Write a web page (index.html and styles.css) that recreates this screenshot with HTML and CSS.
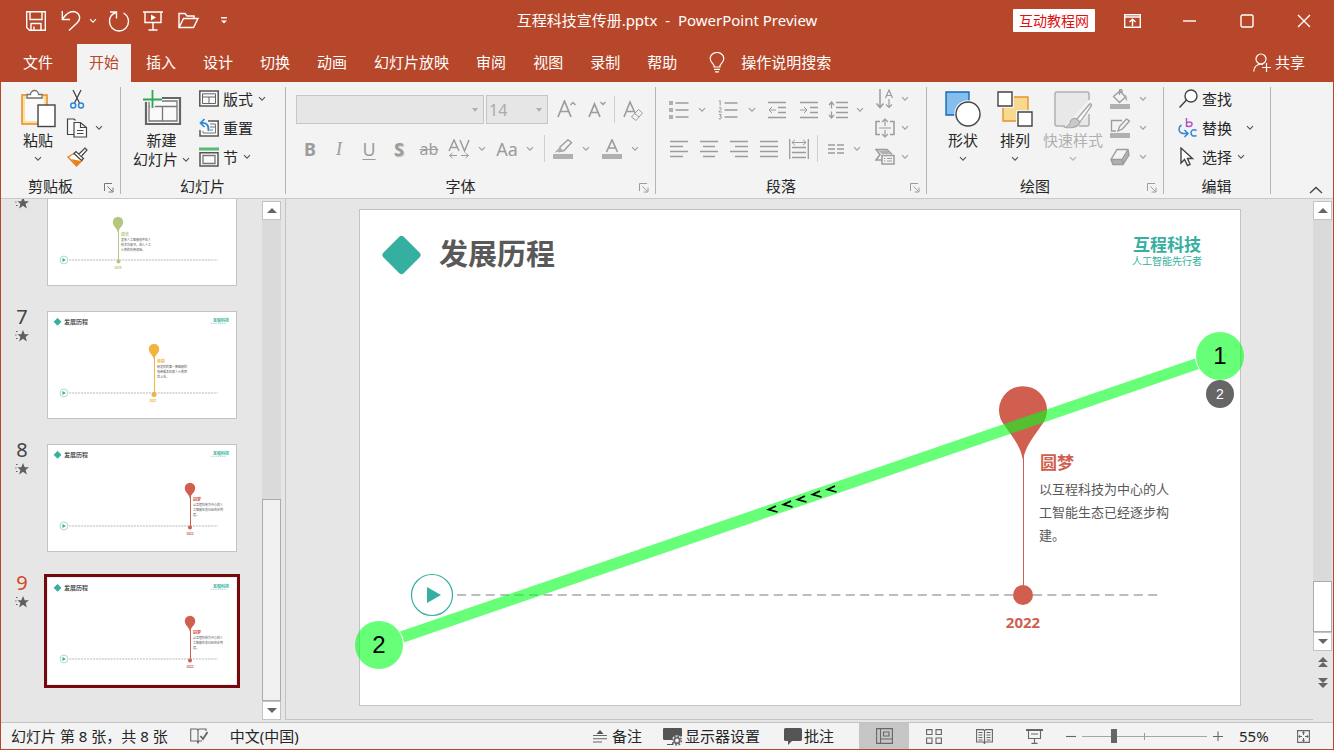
FILE: index.html
```html
<!DOCTYPE html>
<html lang="zh-CN">
<head>
<meta charset="utf-8">
<title>互程科技宣传册.pptx - PowerPoint Preview</title>
<link rel="stylesheet" href="styles.css">
</head>
<body class="window">
<svg class="defs" width="0" height="0" aria-hidden="true">
  <symbol id="chev" viewBox="0 0 8 6"><path d="M1 1.2 4 4.2 7 1.2" fill="none" stroke="currentColor" stroke-width="1.1"/></symbol>
  <symbol id="launch" viewBox="0 0 10 10"><path d="M.5 8V.5H8M3.5 3.5 8.5 8.5M9 4.500V9H4.500" fill="none" stroke="currentColor"/></symbol>
  <symbol id="star" viewBox="0 0 14 12"><path d="M8 0 9.700 4.200H14L10.600 6.900 11.900 11.500 8 8.800 4.100 11.500 5.400 6.900 2.500 4.200H6.300Z" fill="#5f5f5f"/><path d="M1 1.500h1.500M.3 5h1.200M1 8.500h1.500" stroke="#5f5f5f" stroke-width="1.200"/></symbol>
  <symbol id="tri-up" viewBox="0 0 10 5"><path d="M0 5 5 0 10 5Z" fill="#666"/></symbol>
  <symbol id="tri-down" viewBox="0 0 10 5"><path d="M0 0 5 5 10 0Z" fill="#666"/></symbol>
  <symbol id="mini" viewBox="0 0 190 108">
    <circle cx="16.500" cy="83.500" r="4" fill="#fff" stroke="#8fd3c7" stroke-width=".8"/><path d="M15 81.500v4l3.500-2Z" fill="#35b0a0"/>
    <path d="M22 83.500H173" stroke="#b5b5b5" stroke-width="1" stroke-dasharray="2 1"/>
  </symbol>
  <symbol id="mini-mark" viewBox="0 0 190 108">
    <path d="M10 7.500 13.500 11 10 14.500 6.500 11Z" fill="#35b0a0" stroke="#35b0a0" stroke-width="1" stroke-linejoin="round"/>
    <path d="M166 12.500h16" stroke="#8fd3c7" stroke-width=".9" stroke-dasharray="1.500 .8"/>
  </symbol>
  <symbol id="mini-pin" viewBox="-10 -10 20 30"><path d="M0 11C-.6 6-5.200 4.500-5.200 0A5.200 5.200 0 1 1 5.200 0C5.200 4.500 .6 6 0 11Z" fill="currentColor"/></symbol>
</svg>

<header class="titlebar">
  <div class="quick">
    <button aria-label="保存"><svg width="20" height="20" viewBox="0 0 20 20"><path d="M.7.7H19.300V19.300H3.500L.7 16.500ZM4 1V8.500H16V1M5 19V12.500H15V19M8 19V15.500"/></svg></button>
    <button aria-label="撤消"><svg width="20" height="21" viewBox="0 0 20 21"><path d="M1.300 1V9.500H9M1.500 9C5 4 8 1.500 12 1.500C19 2 20.500 9 16 13L8 20.500"/></svg></button>
    <button aria-label="撤消选项"><svg width="8" height="6"><use href="#chev"/></svg></button>
    <button aria-label="恢复"><svg width="22" height="22" viewBox="0 0 22 22"><path d="M2 2H8.500V8.500M8 2.500C3 4 1.500 8 1.500 11.500A9.500 9.500 0 0 0 20.500 11.500C20.500 8 19 5 15.500 3"/></svg></button>
    <button aria-label="从头开始"><svg width="20" height="20" viewBox="0 0 20 20"><path d="M0 1H20M2 1V11.500H18V1M10 12V18.500M5.500 19H14.500"/><path d="M8 3.500V9.500L13 6.500Z" class="solid"/></svg></button>
    <button aria-label="打开"><svg width="21" height="17" viewBox="0 0 21 17"><path d="M1 15.500V1.500H7L9 4H16V6.500M1 15.500 5.500 6.500H20L15.500 15.500Z"/></svg></button>
    <button aria-label="自定义快速访问工具栏"><svg width="6" height="7" viewBox="0 0 6 7"><path d="M0 .8H6"/><path d="M0 3.500H6L3 6.500Z" class="solid"/></svg></button>
  </div>
  <h1 class="doc-title">互程科技宣传册.pptx&nbsp; - &nbsp;PowerPoint Preview</h1>
  <div class="win-controls">
    <span class="site-tag">互动教程网</span>
    <button aria-label="功能区显示选项"><svg width="17" height="14" viewBox="0 0 17 14"><path d="M.7.7H16.300V13.300H.7ZM1 3H16M8.500 12V5.500M5.500 8 8.500 5.200 11.500 8"/></svg></button>
    <button aria-label="最小化"><svg width="13" height="2" viewBox="0 0 13 2"><path d="M0 1H13"/></svg></button>
    <button aria-label="最大化"><svg width="14" height="14" viewBox="0 0 14 14"><rect x="1" y="1" width="12" height="12" rx="1.500"/></svg></button>
    <button aria-label="关闭"><svg width="14" height="14" viewBox="0 0 14 14"><path d="M1 1 13 13M13 1 1 13"/></svg></button>
  </div>
</header>

<nav class="tabs">
  <button class="tab file">文件</button><button class="tab active">开始</button><button class="tab">插入</button><button class="tab">设计</button><button class="tab">切换</button><button class="tab">动画</button><button class="tab">幻灯片放映</button><button class="tab">审阅</button><button class="tab">视图</button><button class="tab">录制</button><button class="tab">帮助</button>
  <button class="tell-me"><svg width="16" height="21" viewBox="0 0 16 21"><path d="M5 15V13.500C4 11 1.200 10 1.200 6.500A6.600 5.800 0 0 1 14.800 6.500C14.800 10 12 11 11 13.500V15ZM5 17.300H11M6 19.800H10"/></svg>操作说明搜索</button>
  <button class="share"><svg width="18" height="19" viewBox="0 0 18 19"><circle cx="8" cy="6" r="5"/><path d="M.7 18.500C1 14 3.500 11.500 8 11L10 11.800M9 14.500H18M13.500 10V19"/></svg>共享</button>
</nav>

<section class="ribbon">
  <div class="group">
    <div class="group-body clip-body">
      <button class="big"><svg class="big-icon" width="36" height="40" viewBox="0 0 36 40"><rect x="2" y="6" width="25" height="29" fill="#fbe0a6" stroke="#e8912d" stroke-width="1.600"/><rect x="5" y="10" width="19" height="22" fill="#fafafa"/><path d="M7 9V5.500H10.500A4 4 0 0 1 18.500 5.500H22V9Z" fill="#fff" stroke="#767676" stroke-width="1.300"/><rect x="18" y="16" width="17" height="21.500" fill="#fff" stroke="#444" stroke-width="1.400"/></svg><span>粘贴</span><svg class="chev" width="8" height="6"><use href="#chev"/></svg></button>
      <div class="stack">
        <button class="row-btn" aria-label="剪切"><svg width="22" height="20" viewBox="0 0 22 20"><path d="M7 1 13.500 14M15 1 8.500 14" fill="none" stroke="#444" stroke-width="1.300"/><circle cx="7.200" cy="16.500" r="2.500" fill="none" stroke="#2b88d8" stroke-width="1.500"/><circle cx="15" cy="16.500" r="2.500" fill="none" stroke="#2b88d8" stroke-width="1.500"/></svg></button>
        <button class="row-btn" aria-label="复制"><svg width="22" height="20" viewBox="0 0 22 20"><path d="M8 16.500H1.500V1H8L9.500 2.500M8 4.500H14.500L20.500 9.500V19H8ZM14.500 4.500V9.500H20.500M11 12.500H17.500M11 15.500H17.500" fill="#fafafa" stroke="#444" stroke-width="1.200"/></svg><svg class="chev far" width="8" height="6"><use href="#chev"/></svg></button>
        <button class="row-btn" aria-label="格式刷"><svg width="22" height="20" viewBox="0 0 22 20"><path d="M2 10 8 6.500 16 13.500 10.500 19Z" fill="#fff" stroke="#e8811a" stroke-width="1.400"/><path d="M5 12 15 14 10.500 18.500Z" fill="#e8811a"/><path d="M8 6.500 10 4.500 17.500 11.500 15.500 13.500Z" fill="#fff" stroke="#444" stroke-width="1.200"/><path d="M13 7 19 1 21 3 15.500 9" fill="#fff" stroke="#444" stroke-width="1.200"/></svg></button>
      </div>
    </div>
    <div class="group-foot"><span>剪贴板</span><button class="launcher" aria-label="剪贴板选项"><svg width="10" height="10"><use href="#launch"/></svg></button></div>
  </div>

  <div class="group">
    <div class="group-body slides-body">
      <button class="big"><svg class="big-icon" width="40" height="40" viewBox="0 0 40 40"><path d="M4 9H38V35H4Z" fill="#fafafa" stroke="#666" stroke-width="2.200"/><path d="M7 12H35V32H7ZM7 17.500H35M20.500 18V32" fill="none" stroke="#777" stroke-width="1.300"/><path d="M10.500 2V21M1 10.500H20" stroke="#f3f3f3" stroke-width="5"/><path d="M10.500 1V19M1 10.500H20" stroke="#2fa84f" stroke-width="1.800"/></svg><span>新建</span><span class="with-chev">幻灯片<svg class="chev" width="8" height="6"><use href="#chev"/></svg></span></button>
      <div class="stack">
        <button class="row-btn"><svg width="20" height="20" viewBox="0 0 20 20"><path d="M.8 2H19.200V17H.8Z" fill="#fafafa" stroke="#555" stroke-width="1.500"/><path d="M3.500 4.800H16.500V14.500H3.500ZM3.500 8H16.500M10 8V14.500" fill="none" stroke="#666"/></svg>版式<svg class="chev" width="8" height="6"><use href="#chev"/></svg></button>
        <button class="row-btn"><svg width="20" height="20" viewBox="0 0 20 20"><path d="M9 3H19.200V18H1V12" fill="#fafafa" stroke="#555" stroke-width="1.500"/><path d="M11 6H16.500V15H4V13M11 9H16M11 12H14" fill="none" stroke="#777"/><path d="M5.500 1 1.500 5 5.500 9M2 5C7 4 10 7 9.500 13" fill="none" stroke="#2b88d8" stroke-width="1.700"/></svg>重置</button>
        <button class="row-btn"><svg width="20" height="20" viewBox="0 0 20 20"><path d="M0 .5H20V3.500H0Z" fill="#5bb974"/><path d="M1 5.700H19V19H1Z" fill="#fafafa" stroke="#555" stroke-width="1.500"/><path d="M4 8.500H16V16.500H4Z" fill="none" stroke="#777" stroke-width="1.300"/></svg>节<svg class="chev" width="8" height="6"><use href="#chev"/></svg></button>
      </div>
    </div>
    <div class="group-foot"><span>幻灯片</span></div>
  </div>

  <div class="group off">
    <div class="group-body font-body">
      <div class="font-row-a">
        <label class="combo"><select disabled aria-label="字体"><option></option></select><svg width="6" height="4" viewBox="0 0 10 5" preserveAspectRatio="none"><path d="M0 0 5 5 10 0Z"/></svg></label>
        <label class="combo"><select disabled aria-label="字号"><option>14</option></select><svg width="6" height="4" viewBox="0 0 10 5" preserveAspectRatio="none"><path d="M0 0 5 5 10 0Z"/></svg></label>
        <button aria-label="增大字号"><svg width="20" height="20" viewBox="0 0 20 20"><path d="M1 17 7.500 1 14 17M3.500 11.500H11.500" stroke-width="1.700"/><path d="M13.500 5 16 2.500 18.500 5" stroke-width="1.400"/></svg></button>
        <button aria-label="减小字号"><svg width="20" height="20" viewBox="0 0 20 20"><path d="M2 17 7.500 4 13 17M4 12.500H11" stroke-width="1.700"/><path d="M13.500 2 16 4.500 18.500 2" stroke-width="1.400"/></svg></button>
        <i class="sep"></i>
        <button aria-label="清除所有格式"><svg width="22" height="22" viewBox="0 0 22 22"><path d="M2 18 8 3 13 14M4 12.500H11.500" stroke-width="1.600"/><path d="M9.500 18 16.500 10.500 20.500 14 14 21.500ZM12.500 14.500 17 18"/></svg></button>
      </div>
      <div class="font-row-b">
        <button class="glyph bold">B</button><button class="glyph italic">I</button><button class="glyph under">U</button><button class="glyph bold shade">S</button><button class="glyph strike">ab</button>
        <button aria-label="字符间距"><svg width="22" height="20" viewBox="0 0 22 20"><path d="M1 12 6 1 11 12M3 8.500H9M12 1 16.500 12 21 1" stroke-width="1.500"/><path d="M4.500 14 1.500 16.500 4.500 19M1.500 16.500H9M17.500 14 20.500 16.500 17.500 19M20.500 16.500H13"/></svg></button>
        <svg class="chev" width="8" height="6"><use href="#chev"/></svg>
        <button class="glyph">Aa</button><svg class="chev" width="8" height="6"><use href="#chev"/></svg>
        <i class="sep"></i>
        <button aria-label="文本突出显示颜色"><svg width="20" height="20" viewBox="0 0 20 20"><path d="M7 8 15 .8 18.500 3.500 11 11.500 6.500 12.500Z" stroke-width="1.400"/><path d="M1.500 13.500 7 8 10.500 12Z" class="fillg"/><path d="M0 15H20V20H0Z" class="fillg"/></svg></button>
        <svg class="chev" width="8" height="6"><use href="#chev"/></svg>
        <button aria-label="字体颜色"><svg width="20" height="20" viewBox="0 0 20 20"><path d="M4.500 13 10 .8 15.500 13M6.500 9H13.500" stroke-width="1.600"/><path d="M0 15H20V20H0Z" class="fillg"/></svg></button>
        <svg class="chev" width="8" height="6"><use href="#chev"/></svg>
      </div>
    </div>
    <div class="group-foot"><span>字体</span><button class="launcher" aria-label="字体选项"><svg width="10" height="10"><use href="#launch"/></svg></button></div>
  </div>

  <div class="group off">
    <div class="group-body para-body">
      <div class="para-rows">
        <div class="para-row-a">
          <button aria-label="项目符号"><svg width="20" height="20" viewBox="0 0 20 20"><path d="M0 1H4V5H0ZM0 8H4V12H0ZM0 15H4V19H0Z" class="fillg"/><path d="M6.500 3H19.500M6.500 10H19.500M6.500 17H19.500" stroke-width="1.400"/></svg></button>
          <svg class="chev" width="8" height="6"><use href="#chev"/></svg>
          <button aria-label="编号"><svg width="20" height="20" viewBox="0 0 20 20"><path d="M.8 1.500 2.200.6V5.500M.8 8Q3.500 6.500 3.300 8.800L.8 12H4M.8 14.600H3.400L2 16.400Q4 16.500 3.300 18.300 2.500 19.500.6 18.800"/><path d="M6.500 3H19.500M6.500 10H19.500M6.500 17H19.500" stroke-width="1.400"/></svg></button>
          <svg class="chev" width="8" height="6"><use href="#chev"/></svg>
          <button aria-label="减少缩进"><svg width="18" height="18" viewBox="0 0 18 18"><path d="M0 1.500H18M10 6.500H18M10 11.500H18M0 16.500H18" stroke-width="1.500"/><path d="M8 9H1M4 6 1 9 4 12"/></svg></button>
          <button aria-label="增加缩进"><svg width="18" height="18" viewBox="0 0 18 18"><path d="M0 1.500H18M10 6.500H18M10 11.500H18M0 16.500H18" stroke-width="1.500"/><path d="M0 9H7M4 6 7 9 4 12"/></svg></button>
          <button aria-label="行距"><svg width="20" height="18" viewBox="0 0 20 18"><path d="M8 1.500H20M8 6.500H20M8 11.500H20M8 16.500H20" stroke-width="1.500"/><path d="M3.500 1V7.500M1 4 3.500 1 6 4M3.500 10.500V17M1 14 3.500 17 6 14" stroke-width="1.300"/></svg></button>
          <svg class="chev" width="8" height="6"><use href="#chev"/></svg>
        </div>
        <div class="para-row-b">
          <button aria-label="左对齐"><svg width="18" height="18" viewBox="0 0 18 18"><path d="M0 1.500H18M0 6.500H13M0 11.500H18M0 16.500H13" stroke-width="1.500"/></svg></button>
          <button aria-label="居中"><svg width="18" height="18" viewBox="0 0 18 18"><path d="M0 1.500H18M3 6.500H15M0 11.500H18M3 16.500H15" stroke-width="1.500"/></svg></button>
          <button aria-label="右对齐"><svg width="18" height="18" viewBox="0 0 18 18"><path d="M0 1.500H18M5 6.500H18M0 11.500H18M5 16.500H18" stroke-width="1.500"/></svg></button>
          <button aria-label="两端对齐"><svg width="18" height="18" viewBox="0 0 18 18"><path d="M0 1.500H18M0 6.500H18M0 11.500H18M0 16.500H18" stroke-width="1.500"/></svg></button>
          <button aria-label="分散对齐"><svg width="20" height="20" viewBox="0 0 20 20"><path d="M.7 0V20M19.300 0V20M3 8.500H17M3 13.500H17M3 18.500H17" stroke-width="1.300"/><path d="M3 3.500H17M6 .8 3 3.500 6 6.200M14 .8 17 3.500 14 6.200"/></svg></button>
          <i class="sep"></i>
          <button aria-label="分栏"><svg width="16" height="10" viewBox="0 0 16 10"><path d="M0 1H7M9 1H16M0 5H7M9 5H16M0 9H7M9 9H16" stroke-width="1.300"/></svg></button>
          <svg class="chev" width="8" height="6"><use href="#chev"/></svg>
        </div>
      </div>
      <div class="stack duo">
        <button aria-label="文字方向"><svg width="20" height="20" viewBox="0 0 20 20"><path d="M5 0V18M1.500 14.500 5 18.500 8.500 14.500" stroke-width="1.500"/><path d="M10.500 9 14 1 17.500 9M11.500 6.500H16.500M14 10V18M11 15.500 14 18.500 17 15.500" stroke-width="1.200"/></svg></button><svg class="chev" width="8" height="6"><use href="#chev"/></svg>
        <button aria-label="对齐文本"><svg width="20" height="20" viewBox="0 0 20 20"><path d="M5 3.500H1V16.500H5M15 3.500H19V16.500H15" stroke-width="1.500"/><path d="M4 10H16M10 1V8M7 4 10 1 13 4M10 12V19M7 16 10 19 13 16" stroke-width="1.200"/></svg></button><svg class="chev" width="8" height="6"><use href="#chev"/></svg>
        <button aria-label="转换为 SmartArt"><svg width="20" height="18" viewBox="0 0 20 18"><path d="M3 2.500H12L15 6H7Z" class="fillg"/><path d="M7 12H1L5 6.500 1 1.500H12L17 6.500" stroke-width="1.500"/><path d="M7 7.500H19V16H7Z" stroke-width="1.500"/><path d="M9 10.500H10.500M12 10.500H17M9 13H10.500M12 13H17"/></svg></button><svg class="chev" width="8" height="6"><use href="#chev"/></svg>
      </div>
    </div>
    <div class="group-foot"><span>段落</span><button class="launcher" aria-label="段落选项"><svg width="10" height="10"><use href="#launch"/></svg></button></div>
  </div>

  <div class="group">
    <div class="group-body draw-body">
      <button class="big"><svg class="big-icon" width="36" height="38" viewBox="0 0 36 38"><path d="M1 2H24V25H1Z" fill="#83beec" stroke="#1668b5" stroke-width="1.400"/><circle cx="23" cy="24" r="13.800" fill="#f3f3f3"/><circle cx="23" cy="24" r="12" fill="#fff" stroke="#444" stroke-width="1.400"/></svg><span>形状</span><svg class="chev" width="8" height="6"><use href="#chev"/></svg></button>
      <button class="big"><svg class="big-icon" width="36" height="38" viewBox="0 0 36 38"><path d="M6 7H31V31H6Z" fill="#f8d98d" stroke="#e8912d" stroke-width="1.400"/><path d="M0 0H17V18H0ZM19 20H36V38H19Z" fill="#f3f3f3"/><path d="M1 2H15V16H1ZM21 22H35V36H21Z" fill="#fff" stroke="#444" stroke-width="1.400"/></svg><span>排列</span><svg class="chev" width="8" height="6"><use href="#chev"/></svg></button>
      <button class="big wide" disabled><svg class="big-icon" width="40" height="38" viewBox="0 0 40 38"><path d="M36 10V4Q36 2 34 2H4Q2 2 2 4V34Q2 36 4 36H12M26 36H34Q36 36 36 34V24" fill="#e8e8e8" stroke="#b0b0b0" stroke-width="1.500"/><path d="M12 37.500Q17 35 17.500 31Q20 27 24 29L36.500 14Q38.500 13 38.500 15.500L27 32Q25 39 12 37.500Z" fill="#c9c9c9" stroke="#aaa" stroke-width="1.200"/><path d="M24 29 36.500 14.500Q38.500 13 38 16L27 32Z" fill="#fff" stroke="#aaa" stroke-width="1.200"/></svg><span>快速样式</span><svg class="chev" width="8" height="6"><use href="#chev"/></svg></button>
      <div class="stack duo off">
        <button aria-label="形状填充"><svg width="20" height="20" viewBox="0 0 20 20"><path d="M3.500 7.500 10 2 15.500 8 9.500 13.500ZM9.500 6V1.500Q10-.5 12 1V5" stroke-width="1.300"/><path d="M15 5.500Q18 8 17 12Q14.500 11 15 5.500ZM0 15H20V20H0Z" class="fillg"/></svg></button><svg class="chev" width="8" height="6"><use href="#chev"/></svg>
        <button aria-label="形状轮廓"><svg width="20" height="20" viewBox="0 0 20 20"><path d="M12 2.500H1.500V13H6M8 13 9.500 8.500 16.500 1 19.500 3 12.500 11Z" stroke-width="1.300"/><path d="M0 15H20V20H0Z" class="fillg"/></svg></button><svg class="chev" width="8" height="6"><use href="#chev"/></svg>
        <button aria-label="形状效果"><svg width="20" height="18" viewBox="0 0 20 18"><path d="M1 12H12V16.500H3ZM12 12 18.500 2V7L12.500 16.500" class="fillg"/><path d="M7 1.500H18L19 7 13 16.500H3L1 11.500ZM1 11.500H12L13 16.500M12 11.500 18 1.500" stroke-width="1.400"/></svg></button><svg class="chev" width="8" height="6"><use href="#chev"/></svg>
      </div>
    </div>
    <div class="group-foot off"><span>绘图</span><button class="launcher" aria-label="绘图选项"><svg width="10" height="10"><use href="#launch"/></svg></button></div>
  </div>

  <div class="group">
    <div class="group-body edit-body">
      <div class="stack">
        <button class="row-btn"><svg width="20" height="20" viewBox="0 0 20 20"><circle cx="13" cy="7" r="6" fill="#fff" stroke="#444" stroke-width="1.400"/><path d="M8.500 11 1.500 18.500" stroke="#444" stroke-width="1.500"/></svg>查找</button>
        <button class="row-btn"><svg width="20" height="20" viewBox="0 0 20 20"><path d="M8.500 0V9M8.500 5.500C9 3.500 14 3 14 6S9 9.500 8.500 7" fill="none" stroke="#b055c5" stroke-width="1.500"/><path d="M18.500 12.500C15 10.500 13 12.500 13 15S15.500 19 18.500 17.500M3.500 7C0 9 0 15 5.500 15.500H9.500M6.500 12 10 15.500 6.500 19" fill="none" stroke="#2b88d8" stroke-width="1.500"/></svg>替换<svg class="chev far" width="8" height="6"><use href="#chev"/></svg></button>
        <button class="row-btn"><svg width="20" height="20" viewBox="0 0 20 20"><path d="M3 1V16L6.500 12.500 9.500 18.500 12 17.300 9.500 11.500H14.500Z" fill="#fff" stroke="#444" stroke-width="1.400"/></svg>选择<svg class="chev" width="8" height="6"><use href="#chev"/></svg></button>
      </div>
    </div>
    <div class="group-foot"><span>编辑</span></div>
  </div>
  <button class="collapse" aria-label="折叠功能区"><svg width="14" height="8" viewBox="0 0 14 8"><path d="M1 7 7 1.500 13 7" fill="none" stroke="#444" stroke-width="1.300"/></svg></button>
</section>

<main class="workspace">
  <aside class="slide-pane">
    <ol class="thumbs">
      <li><div class="tag"><span></span><svg width="14" height="12"><use href="#star"/></svg></div>
        <svg class="thumb" viewBox="1 1 188 106" color="#b3c77e"><use href="#mini"/><use href="#mini-pin" x="61" y="34" width="20" height="30"/><path d="M71.500 50V83" stroke="currentColor"/><circle cx="71.500" cy="83.500" r="2" fill="currentColor"/><text class="m-label" x="74" y="58">成长</text><text class="m-body" x="74" y="63">发布人工智能软件机人</text><text class="m-body" x="74" y="68">技术白皮书，进入人工</text><text class="m-body" x="74" y="73">火热的应用领域。</text><text class="m-year" x="71" y="91">2019</text></svg></li>
      <li><div class="tag"><span>7</span><svg width="14" height="12"><use href="#star"/></svg></div>
        <svg class="thumb" viewBox="1 1 188 106" color="#f2b440"><use href="#mini"/><use href="#mini-mark"/><text class="m-title" x="17" y="13">发展历程</text><text class="m-logo" x="166" y="11">互程科技</text><use href="#mini-pin" x="97" y="28" width="20" height="30"/><path d="M107.500 44V83" stroke="currentColor"/><circle cx="107" cy="83.500" r="2.500" fill="currentColor"/><text class="m-label" x="110" y="52">收获</text><text class="m-body" x="110" y="57">研发的的第一款智能的</text><text class="m-body" x="110" y="62">电商服务机器人火热面</text><text class="m-body" x="110" y="67">世上市。</text><text class="m-year" x="106" y="91">2021</text></svg></li>
      <li><div class="tag"><span>8</span><svg width="14" height="12"><use href="#star"/></svg></div>
        <svg class="thumb" viewBox="1 1 188 106" color="#d05f50"><use href="#mini"/><use href="#mini-mark"/><text class="m-title" x="17" y="13">发展历程</text><text class="m-logo" x="166" y="11">互程科技</text><use href="#mini-pin" x="133" y="34" width="20" height="30"/><path d="M143.500 50V83" stroke="currentColor"/><circle cx="143" cy="83.500" r="2" fill="currentColor"/><text class="m-label" x="146" y="57">圆梦</text><text class="m-body" x="146" y="62">以互程科技为中心的人</text><text class="m-body" x="146" y="67">工智能生态已经逐步构</text><text class="m-body" x="146" y="72">建。</text><text class="m-year" x="143" y="91">2022</text></svg></li>
      <li class="current"><div class="tag"><span>9</span><svg width="14" height="12"><use href="#star"/></svg></div>
        <svg class="thumb" viewBox="1 1 188 106" color="#d05f50"><use href="#mini"/><use href="#mini-mark"/><text class="m-title" x="17" y="13">发展历程</text><text class="m-logo" x="166" y="11">互程科技</text><use href="#mini-pin" x="133" y="34" width="20" height="30"/><path d="M143.500 50V83" stroke="currentColor"/><circle cx="143" cy="83.500" r="2" fill="currentColor"/><text class="m-label" x="146" y="57">圆梦</text><text class="m-body" x="146" y="62">以互程科技为中心的人</text><text class="m-body" x="146" y="67">工智能生态已经逐步构</text><text class="m-body" x="146" y="72">建。</text><text class="m-year" x="143" y="91">2022</text></svg></li>
    </ol>
    <div class="scroll">
      <button aria-label="向上滚动"><svg width="10" height="5"><use href="#tri-up"/></svg></button>
      <div class="track"><div class="knob tall"></div></div>
      <button aria-label="向下滚动"><svg width="10" height="5"><use href="#tri-down"/></svg></button>
    </div>
  </aside>

  <section class="stage">
    <svg class="slide" viewBox="0 0 882 497" role="img" aria-label="发展历程">
      <rect x=".5" y=".5" width="881" height="496" fill="#fff" stroke="#c3c3c3"/>
      <path d="M42.500 30.500 58 46 42.500 61.500 27 46Z" fill="#35b0a0" stroke="#35b0a0" stroke-width="7" stroke-linejoin="round"/>
      <text class="s-title" x="80" y="56">发展历程</text>
      <text class="s-logo" x="774" y="42">互程科技</text>
      <text class="s-logo-sub" x="773" y="56">人工智能先行者</text>
      <path d="M98 386H799" stroke="#bdbdbd" stroke-width="2" stroke-dasharray="9 5.400"/>
      <circle cx="73" cy="386" r="20.500" fill="#fff" stroke="#35b0a0" stroke-width="1.200"/>
      <path d="M68 378V394L82 386Z" fill="#35b0a0"/>
      <path d="M664 251C661 236 654 229 646 217A24 24 0 1 1 682 217C674 229 667 236 664 251Z" fill="#d05f50"/>
      <path d="M664.500 245V380" stroke="#d05f50"/>
      <circle cx="664" cy="386" r="10" fill="#d05f50"/>
      <text class="s-label" x="681" y="260">圆梦</text>
      <text class="s-body" x="680" y="285">以互程科技为中心的人</text>
      <text class="s-body" x="680" y="308">工智能生态已经逐步构</text>
      <text class="s-body" x="680" y="331">建。</text>
      <text class="s-year" x="664" y="419">2022</text>
      <g fill="#00ff1c" fill-opacity=".6">
        <circle cx="861" cy="147" r="24"/><circle cx="20" cy="436" r="24"/>
        <path d="M41 422.500 836 149.500Q836.500 155 840 160L45 433.500Q44 427 41 422.500Z"/>
      </g>
      <g fill="none" stroke="#000" stroke-width="1.700">
        <path d="M417 297 409.500 300.500 418.500 303M432 292 424.500 295.500 433.500 298M446 287 438.500 290.500 447.500 293M461 282 453.500 285.500 462.500 288M476 277 468.500 280.500 477.500 283"/>
      </g>
      <circle cx="861" cy="185" r="14" fill="#666"/>
      <text class="s-mark" x="861" y="155">1</text><text class="s-mark" x="20" y="444">2</text><text class="s-mark small" x="861" y="190">2</text>
    </svg>
  </section>

  <div class="scroll main-scroll">
    <button aria-label="向上滚动"><svg width="10" height="5"><use href="#tri-up"/></svg></button>
    <div class="track"><div class="knob"></div></div>
    <button aria-label="向下滚动"><svg width="10" height="5"><use href="#tri-down"/></svg></button>
    <button class="bare" aria-label="上一张幻灯片"><svg width="10" height="10" viewBox="0 0 10 10"><path d="M0 5 5 0 10 5ZM0 10 5 5 10 10Z" fill="#666"/></svg></button>
    <button class="bare" aria-label="下一张幻灯片"><svg width="10" height="10" viewBox="0 0 10 10"><path d="M0 0 5 5 10 0ZM0 5 5 10 10 5Z" fill="#666"/></svg></button>
  </div>
</main>

<footer class="status">
  <div class="status-left"><span>幻灯片 第 8 张，共 8 张</span>
    <button aria-label="拼写检查"><svg width="18" height="16" viewBox="0 0 18 16"><path d="M8 2.500 7 1H.7V13H7L8 15 9 13H12M8 2.500 9 1H16V3M8 2.500V15" /><path d="M10.500 8 13 11 17.500 4" stroke-width="1.800"/></svg></button>
    <span>中文(中国)</span></div>
  <div class="status-mid">
    <button><svg width="14" height="14" viewBox="0 0 14 14"><path d="M3.500 5 7 1 10.500 5Z" class="fills"/><path d="M0 6.500H14M0 9.800H14M0 13H9"/></svg>备注</button>
    <button class="tight"><svg width="20" height="19" viewBox="0 0 20 19"><path d="M1 1H18Q19 1 19 2V9L12 13H2Q0 13 0 12V2Q0 1 1 1ZM4 17H9V15H12V18H4Z" class="fills"/><circle cx="14" cy="13.500" r="5.200" class="halo"/><circle cx="14" cy="13.500" r="2.800" stroke-width="1.800"/><circle cx="14" cy="13.500" r="4.500" stroke-width="1.500" stroke-dasharray="1.800 1.700"/></svg>显示器设置</button>
    <button class="tight comment"><svg width="18" height="17" viewBox="0 0 18 17"><path d="M1.500 0H16.500Q18 0 18 1.500V11.500Q18 13 16.500 13H8L4 17V13H1.500Q0 13 0 11.500V1.500Q0 0 1.500 0Z" class="fills"/></svg>批注</button>
  </div>
  <div class="views">
    <button class="on" aria-label="普通视图"><svg width="17" height="16" viewBox="0 0 17 16"><path d="M.6.6H16.400V15.400H.6ZM4.500.6V15.400M4.500 11H16.400M7.500 4H13V8H7.500Z"/></svg></button>
    <button aria-label="幻灯片浏览"><svg width="16" height="15" viewBox="0 0 16 15"><path d="M.6.6H6V5.500H.6ZM10 .6H15.400V5.500H10ZM.6 9H6V14.400H.6ZM10 9H15.400V14.400H10Z"/></svg></button>
    <button aria-label="阅读视图"><svg width="17" height="15" viewBox="0 0 17 15"><path d="M8.500 2 7.500.6H.6V13H7.500L8.500 14.500 9.500 13H16.400V.6H9.500ZM8.500 2V14M2.500 3.500H6.500M2.500 6H6.500M2.500 8.500H6.500M2.500 11H6.500M10.500 3.500H14.500M10.500 6H14.500M10.500 8.500H14.500M10.500 11H14.500"/></svg></button>
    <button aria-label="幻灯片放映"><svg width="17" height="15" viewBox="0 0 17 15"><path d="M0 1H17" stroke-width="2"/><path d="M2.500 1V9.500H14.500V1M5 5H12M8.500 9.500V14M5.500 14.400H11.500"/></svg></button>
  </div>
  <div class="zoom">
    <button aria-label="缩小"><svg width="10" height="10" viewBox="0 0 10 10"><path d="M0 5.500H10"/></svg></button>
    <input type="range" min="0" max="100" value="24" aria-label="缩放">
    <button aria-label="放大"><svg width="10" height="10" viewBox="0 0 10 10"><path d="M0 5.500H10M5 .5V10"/></svg></button>
    <span class="pct">55%</span>
    <button class="fit" aria-label="适应窗口"><svg width="13" height="13" viewBox="0 0 13 13"><path d="M.6.6H12.400V12.400H.6ZM6.500 2V5M6.500 8V11M2 6.500H5M8 6.500H11M5.500 3 6.500 2 7.500 3M5.500 10 6.500 11 7.500 10M3 5.500 2 6.500 3 7.500M10 5.500 11 6.500 10 7.500"/></svg></button>
  </div>
</footer>
</body>
</html>
```
FILE: styles.css
```css
* { box-sizing: border-box; }

.window {
  margin: 0;
  height: 100vh;
  display: flex;
  flex-direction: column;
  overflow: hidden;
  border: 1px solid #b7472a;
  border-top: 0;
  background: #e6e6e6;
  color: #262626;
  font: 15px/19px "Noto Sans", "Noto Sans CJK SC", sans-serif;
}
button { margin: 0; padding: 0; border: 0; background: none; color: inherit; font: inherit; white-space: nowrap; }
svg { display: block; flex: none; }
.defs { position: absolute; }
.chev { color: #555; }

/* title bar */
.titlebar, .tabs { background: #b7472a; color: #fff; flex: none; }
.titlebar { display: grid; grid-template-columns: 1fr auto 1fr; height: 44px; padding-bottom: 3px; align-items: center; }
.titlebar svg, .tell-me svg, .share svg { fill: none; stroke: #fff; stroke-width: 1.4; }
.titlebar .solid { fill: #fff; stroke: none; }
.titlebar button { display: flex; justify-content: center; align-items: center; height: 32px; }
.quick { display: grid; grid-template-columns: 34px 36px 8px 44px 24px 46px 26px; padding-left: 18px; align-items: center; }
.doc-title { margin: 0; font-size: 15px; font-weight: 400; }
.win-controls { display: grid; grid-template-columns: auto 57px 57px 57px 57px; justify-content: end; align-items: center; padding-right: 1px; }
.site-tag { margin-right: 9px; padding: 2px 6px; border-radius: 1px; background: #fff; color: #e01010; font-size: 14px; }

/* tabs */
.tabs { display: flex; height: 38px; gap: 3px; padding-left: 10px; align-items: stretch; }
.tab { padding: 0 12px 2px; }
.tab.file { margin-right: 9px; }
.tab.active { background: #f3f3f3; color: #b7472a; }
.tell-me, .share { display: flex; align-items: center; padding-bottom: 1px; }
.tell-me { gap: 16px; margin-left: 17px; }
.share { gap: 4px; margin-left: auto; margin-right: 28px; }
.share svg, .tell-me svg { stroke-width: 1.2; }

/* ribbon */
.ribbon { display: flex; flex: none; height: 117px; padding: 5px 0 4px; background: #f3f3f3; border-bottom: 1px solid #c9c9c9; }
.group { display: flex; flex-direction: column; border-right: 1px solid #b5b5b5; }
.group-body { display: flex; flex: 1; }
.group-foot { display: flex; height: 16px; align-items: center; padding-right: 1px; }
.group-foot span { flex: 1; text-align: center; color: #262626; }
.launcher { display: flex; width: 19px; height: 14px; padding-left: 4px; align-items: flex-end; color: #777; }
.big { display: flex; flex-direction: column; align-items: center; height: 82px; min-width: 38px; }
.big-icon { height: 44px; }
.big .chev { margin-top: 6px; }
.with-chev { display: flex; align-items: center; gap: 4px; }
.with-chev .chev { margin-top: 0; }
.stack { display: grid; grid-auto-rows: 24px; gap: 5px 0; align-content: start; justify-items: start; }
.row-btn { display: flex; align-items: center; gap: 4px; }
.row-btn .chev { margin-left: 1px; }
.row-btn .far { margin-left: 10px; }
.clip-body { padding: 0 17px 0 18px; gap: 9px; }
.clip-body .far { margin-left: 3px; }
.slides-body { padding: 0 19px 0 12px; gap: 9px; }
.font-body { flex-direction: column; gap: 10px; padding: 8px 7px 0 10px; }
.font-row-a, .font-row-b, .para-row-a, .para-row-b { display: grid; height: 29px; align-items: center; justify-items: center; }
.font-row-a { grid-template-columns: 190px 64px 34px 26px 8px 30px; }
.font-row-a .combo { width: 100%; padding-right: 2px; }
.font-row-b { grid-template-columns: 28px 30px 30px 30px 30px 30px 16px 34px 12px 16px 22px 24px 28px 18px; }
.para-body { padding: 0 12px 0 8px; gap: 8px; }
.para-rows { display: flex; flex-direction: column; gap: 10px; padding-top: 8px; }
.para-row-a { grid-template-columns: 30px 16px 36px 12px 38px 26px 32px 12px; }
.para-row-b { grid-template-columns: 30px 30px 30px 30px 30px 6px 32px 10px; }
.duo { grid-template-columns: 22px 18px; justify-items: center; align-items: center; }
.draw-body { padding: 0 12px 0 10px; }
.draw-body .big { width: 52px; }
.draw-body .wide { width: 64px; color: #b0b0b0; }
.draw-body .wide .chev { color: #b0b0b0; }
.draw-body .duo { grid-template-columns: 30px 16px; }
.edit-body { padding: 0 16px 0 14px; }
.off, .off .chev, .off .launcher { color: #9c9c9c; }
.off button svg { fill: none; stroke: #9c9c9c; }
.off .launcher svg { stroke: none; }
.off .fillg { fill: #b0b0b0; stroke: none; }
.off .chev { stroke: none; }
.sep { width: 1px; height: 27px; background: #cfcfcf; }
.glyph { font-size: 18px; line-height: 24px; }
.bold { font-weight: 700; }
.italic { font-family: "Liberation Serif", serif; font-style: italic; }
.under { text-decoration: underline; text-underline-offset: 3px; }
.shade { text-shadow: 1px 1px 1px #bbb; }
.strike { font-size: 16px; text-decoration: line-through; }
.combo { position: relative; display: block; height: 29px; }
.combo select { width: 100%; height: 100%; padding: 0 2px; appearance: none; border: 1px solid #c6c6c6; border-radius: 0; background: #e6e6e6; color: #b0a8a8; opacity: 1; font: 16px "Noto Sans", sans-serif; }
.combo svg { position: absolute; right: 8px; top: 13px; fill: #b0b0b0; }
.collapse { margin-left: auto; align-self: flex-end; padding: 0 10px 0 0; }

/* workspace */
.workspace { display: flex; flex: 1; min-height: 0; padding-bottom: 2px; border-bottom: 1px solid #c3c3c3; }
.slide-pane { display: flex; flex: none; width: 285px; border-right: 1px solid #c3c3c3; }
.thumbs { display: flex; flex: 1; flex-direction: column; justify-content: flex-end; gap: 25px; margin: 0; padding: 0 0 35px 10px; overflow: hidden; list-style: none; }
.thumbs li { display: flex; flex: none; gap: 14px; }
.tag { display: flex; flex-direction: column; width: 22px; align-items: center; gap: 8px; }
.tag span { height: 11px; font-size: 20px; line-height: 11px; color: #444; }
.current .tag span { color: #d24726; }
.thumb { width: 190px; height: 108px; border: 1px solid #c3c3c3; background: #fff; }
.current .thumb { outline: 3px solid #75070f; border-color: #eee; }
.m-title { font: 700 6px "Noto Sans CJK SC", sans-serif; fill: #555; }
.m-logo { font: 700 4px "Noto Sans CJK SC", sans-serif; fill: #35b0a0; }
.m-label { font: 700 4px "Noto Sans CJK SC", sans-serif; fill: currentColor; }
.m-body { font: 3px "Noto Sans CJK SC", sans-serif; fill: #555; }
.m-year { font: 700 3px "Noto Sans", sans-serif; fill: currentColor; text-anchor: middle; }
.scroll { display: flex; flex: none; flex-direction: column; width: 19px; margin: 2px 4px 0 0; }
.scroll button { display: flex; height: 19px; align-items: center; justify-content: center; border: 1px solid #c3c3c3; background: #fff; }
.scroll .bare { height: 21px; border: 0; background: none; }
.track { display: flex; flex: 1; flex-direction: column; justify-content: flex-end; background: #dadada; }
.knob { height: 51px; border: 1px solid #ababab; background: #fff; }
.tall { height: 42%; background: #f0f0f0; }
.main-scroll { margin: 2px 1px 0 0; padding-bottom: 27px; }
.stage { flex: 1; min-width: 0; padding: 10px 0 13px 1px; border-bottom: 1px solid #c3c3c3; }
.slide { width: 100%; height: 100%; overflow: visible; }
.s-title { font: 700 29px "Noto Sans CJK SC", sans-serif; fill: #595959; }
.s-logo { font: 700 17px "Noto Sans CJK SC", sans-serif; fill: #35b0a0; }
.s-logo-sub { font: 10px "Noto Sans CJK SC", sans-serif; fill: #35b0a0; }
.s-label { font: 700 17px "Noto Sans CJK SC", sans-serif; fill: #d05f50; }
.s-body { font: 13px "Noto Sans CJK SC", sans-serif; fill: #595959; }
.s-year { font: 700 15px "Noto Sans", sans-serif; fill: #d05f50; text-anchor: middle; }
.s-mark { font: 24px "Liberation Sans", sans-serif; text-anchor: middle; }
.small { font-size: 14px; fill: #fff; }

/* status bar */
.status { display: flex; flex: none; height: 26px; align-items: center; background: #f3f3f3; }
.status svg { fill: none; stroke: #666; stroke-width: 1.1; }
.status .fills { fill: #555; stroke: none; }
.status .halo { fill: #f3f3f3; stroke: none; }
.status-left { display: flex; flex: 1; align-items: center; gap: 22px; padding-left: 10px; }
.status-mid { display: flex; gap: 21px; margin-right: 25px; }
.status-mid button { display: flex; align-items: center; gap: 5px; }
.status-mid .tight { gap: 2px; }
.comment { margin-left: 3px; }
.views { display: flex; align-self: stretch; }
.views button { display: flex; width: 50px; align-items: center; justify-content: center; }
.views .on { background: #c6c6c6; }
.zoom { display: flex; align-items: center; padding: 0 23px 0 7px; }
.zoom input { width: 125px; height: 14px; margin: 0 6px; appearance: none; background: linear-gradient(#999, #999) 50% 50% / 1px 7px no-repeat, linear-gradient(#a6a6a6, #a6a6a6) 50% 50% / 100% 1px no-repeat; }
.zoom input::-webkit-slider-thumb { appearance: none; width: 6px; height: 14px; background: #666; }
.pct { width: 40px; margin-left: 16px; }
.fit { margin-left: 18px; }
```
